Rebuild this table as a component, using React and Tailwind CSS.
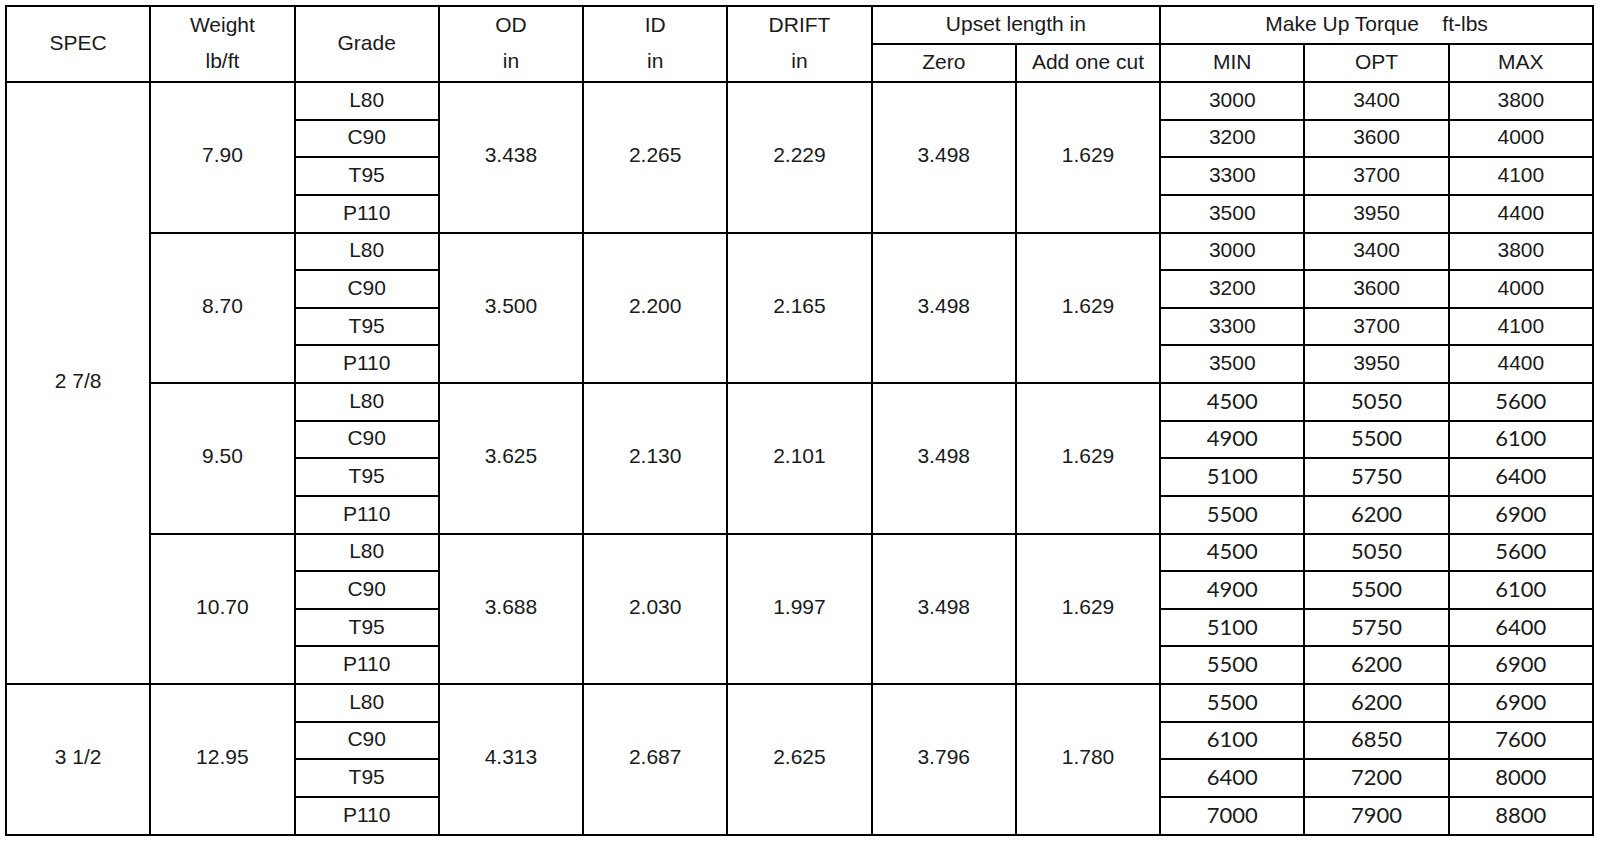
const grades = ['L80', 'C90', 'T95', 'P110']

const low = [
  ['3000', '3400', '3800'],
  ['3200', '3600', '4000'],
  ['3300', '3700', '4100'],
  ['3500', '3950', '4400'],
]
const high = [
  ['4500', '5050', '5600'],
  ['4900', '5500', '6100'],
  ['5100', '5750', '6400'],
  ['5500', '6200', '6900'],
]

const groups = [
  {
    spec: '2 7/8',
    items: [
      { w: '7.90', od: '3.438', id: '2.265', drift: '2.229', zero: '3.498', cut: '1.629', torque: low, alt: false },
      { w: '8.70', od: '3.500', id: '2.200', drift: '2.165', zero: '3.498', cut: '1.629', torque: low, alt: false },
      { w: '9.50', od: '3.625', id: '2.130', drift: '2.101', zero: '3.498', cut: '1.629', torque: high, alt: true },
      { w: '10.70', od: '3.688', id: '2.030', drift: '1.997', zero: '3.498', cut: '1.629', torque: high, alt: true },
    ],
  },
  {
    spec: '3 1/2',
    items: [
      {
        w: '12.95', od: '4.313', id: '2.687', drift: '2.625', zero: '3.796', cut: '1.780',
        torque: [
          ['5500', '6200', '6900'],
          ['6100', '6850', '7600'],
          ['6400', '7200', '8000'],
          ['7000', '7900', '8800'],
        ],
        alt: true,
      },
    ],
  },
]

const cell = 'border-2 border-black px-0 pt-0 pb-[2px] leading-[30px] text-center align-middle'
const big = 'border-2 border-black px-0 pt-0 pb-[4px] leading-[30px] text-center align-middle'

export default function App() {
  const rows = []
  groups.forEach((g, gi) => {
    g.items.forEach((it, ii) => {
      grades.forEach((gr, ri) => {
        const first = ri === 0
        rows.push(
          <tr key={`${gi}-${ii}-${ri}`} className="h-[37.64px]">
            {ii === 0 && first && (
              <td rowSpan={g.items.length * 4} className={big}>
                {g.spec}
              </td>
            )}
            {first && <td rowSpan={4} className={big}>{it.w}</td>}
            <td className={cell}>{gr}</td>
            {first && (
              <>
                <td rowSpan={4} className={big}>{it.od}</td>
                <td rowSpan={4} className={big}>{it.id}</td>
                <td rowSpan={4} className={big}>{it.drift}</td>
                <td rowSpan={4} className={big}>{it.zero}</td>
                <td rowSpan={4} className={big}>{it.cut}</td>
              </>
            )}
            {it.torque[ri].map((v, k) => (
              <td
                key={k}
                className={
                  it.alt
                    ? `${cell} font-['Lato',sans-serif] text-[22px]`
                    : cell
                }
              >
                {v}
              </td>
            ))}
          </tr>
        )
      })
    })
  })

  return (
    <div className="min-h-screen bg-white pl-[5px] pt-[5px] font-['Liberation_Sans',Arial,sans-serif] text-[21px] text-[#1a1a1a]">
      <table className="w-[1589px] table-fixed border-collapse">
        <thead>
          <tr className="h-[37.64px]">
            <th rowSpan={2} className={`${cell} font-normal`}>SPEC</th>
            <th rowSpan={2} className={`${cell} font-normal`}>
              <div className="leading-[36px]">Weight</div>
              <div className="leading-[36px]">lb/ft</div>
            </th>
            <th rowSpan={2} className={`${cell} font-normal`}>Grade</th>
            <th rowSpan={2} className={`${cell} font-normal`}>
              <div className="leading-[36px]">OD</div>
              <div className="leading-[36px]">in</div>
            </th>
            <th rowSpan={2} className={`${cell} font-normal`}>
              <div className="leading-[36px]">ID</div>
              <div className="leading-[36px]">in</div>
            </th>
            <th rowSpan={2} className={`${cell} font-normal`}>
              <div className="leading-[36px]">DRIFT</div>
              <div className="leading-[36px]">in</div>
            </th>
            <th colSpan={2} className={`${cell} font-normal`}>Upset length in</th>
            <th colSpan={3} className={`${cell} font-normal whitespace-pre`}>Make Up Torque    ft-lbs</th>
          </tr>
          <tr className="h-[37.64px]">
            <th className={`${cell} font-normal`}>Zero</th>
            <th className={`${cell} font-normal`}>Add one cut</th>
            <th className={`${cell} font-normal`}>MIN</th>
            <th className={`${cell} font-normal`}>OPT</th>
            <th className={`${cell} font-normal`}>MAX</th>
          </tr>
        </thead>
        <tbody>{rows}</tbody>
      </table>
    </div>
  )
}
